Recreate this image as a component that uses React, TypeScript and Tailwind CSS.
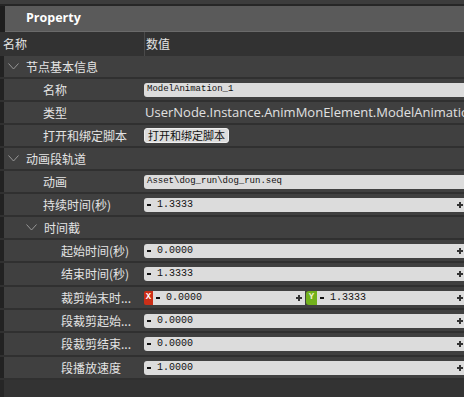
import React from 'react';

type Row = {
  label: string;
  level: number;
  kind: 'group' | 'text' | 'plain' | 'button' | 'num' | 'xy';
  value?: string;
  value2?: string;
  tall?: boolean;
};

const rows: Row[] = [
  { label: '节点基本信息', level: 0, kind: 'group' },
  { label: '名称', level: 1, kind: 'text', value: 'ModelAnimation_1' },
  { label: '类型', level: 1, kind: 'plain', value: 'UserNode.Instance.AnimMonElement.ModelAnimation' },
  { label: '打开和绑定脚本', level: 1, kind: 'button', value: '打开和绑定脚本' },
  { label: '动画段轨道', level: 0, kind: 'group' },
  { label: '动画', level: 1, kind: 'text', value: 'Asset\\dog_run\\dog_run.seq' },
  { label: '持续时间(秒)', level: 1, kind: 'num', value: '1.3333' },
  { label: '时间截', level: 1, kind: 'group' },
  { label: '起始时间(秒)', level: 2, kind: 'num', value: '0.0000' },
  { label: '结束时间(秒)', level: 2, kind: 'num', value: '1.3333', tall: true },
  { label: '裁剪始末时...', level: 2, kind: 'xy', value: '0.0000', value2: '1.3333' },
  { label: '段裁剪起始...', level: 2, kind: 'num', value: '0.0000' },
  { label: '段裁剪结束...', level: 2, kind: 'num', value: '0.0000', tall: true },
  { label: '段播放速度', level: 2, kind: 'num', value: '1.0000' },
];

const cjk = "font-['Noto_Sans_CJK_SC',sans-serif]";

function Chevron() {
  return (
    <svg width="11" height="7" viewBox="0 0 11 7" className="shrink-0">
      <polyline points="0.5,0.5 5.5,6 10.5,0.5" fill="none" stroke="#a0a0a0" strokeWidth="0.9" />
    </svg>
  );
}

function Minus() {
  return <span className="w-[4px] h-[2px] bg-[#111] shrink-0" />;
}

function Plus() {
  return (
    <svg width="6" height="6" viewBox="0 0 6 6" className="shrink-0">
      <rect x="0" y="2" width="6" height="2" fill="#333" />
      <rect x="2" y="0" width="2" height="6" fill="#333" />
    </svg>
  );
}

function NumField({ value, className }: { value: string; className: string }) {
  return (
    <div className={`h-[14px] bg-[#dcdcdc] flex items-center pl-[3px] pr-[3px] ${className}`}>
      <Minus />
      <span className="ml-[6px] flex-1 text-[10px] leading-none text-[#111] font-['Liberation_Mono',monospace]">{value}</span>
      <Plus />
    </div>
  );
}

function Label({ row }: { row: Row }) {
  if (row.kind === 'group') {
    const pad = row.level === 0 ? 'pl-[4px]' : 'pl-[22px]';
    return (
      <div className={`w-[140px] shrink-0 flex items-center ${pad}`}>
        <Chevron />
        <span className={`ml-[7px] text-[12px] text-[#e4e4e4] whitespace-nowrap ${cjk}`}>{row.label}</span>
      </div>
    );
  }
  const pad = row.level === 1 ? 'pl-[39px]' : 'pl-[57px]';
  return (
    <div className={`w-[140px] shrink-0 flex items-center ${pad}`}>
      <span className={`text-[12px] text-[#e4e4e4] whitespace-nowrap ${cjk}`}>{row.label}</span>
    </div>
  );
}

function Value({ row }: { row: Row }) {
  switch (row.kind) {
    case 'text':
      return (
        <div className="w-[330px] h-[14px] bg-[#dcdcdc] rounded-l-[3px] flex items-center pl-[3px]">
          <span className="text-[9px] leading-none text-[#111] font-['Liberation_Mono',monospace]">{row.value}</span>
        </div>
      );
    case 'plain':
      return (
        <span className="pl-[1px] text-[13px] text-[#e0e0e0] whitespace-nowrap font-['Open_Sans',sans-serif]">{row.value}</span>
      );
    case 'button':
      return (
        <div className={`h-[15px] bg-[#dcdcdc] border border-[#eeeeee] rounded-[3px] flex items-center px-[3px] text-[11px] leading-none text-[#111] ${cjk}`}>
          {row.value}
        </div>
      );
    case 'num':
      return <NumField value={row.value!} className="w-[322px] rounded-l-[3px]" />;
    case 'xy':
      return (
        <div className="flex items-center">
          <span className="w-[9px] h-[14px] bg-[#cc2f18] rounded-l-[2px] flex items-center justify-center text-[9px] font-bold text-white leading-none font-['Liberation_Mono',monospace]">X</span>
          <NumField value={row.value!} className="w-[152px]" />
          <span className="ml-[1px] w-[11px] h-[14px] bg-[#72b11c] rounded-l-[3px] flex items-center justify-center text-[9px] font-bold text-[#f0f0d0] leading-none font-['Liberation_Mono',monospace]">Y</span>
          <NumField value={row.value2!} className="w-[149px]" />
        </div>
      );
    default:
      return null;
  }
}

export default function App() {
  return (
    <div className="w-[464px] h-[397px] bg-[#333333] overflow-hidden flex flex-col select-none">
      {/* top strip */}
      <div className="h-[4px] bg-[#3c3c3c] shrink-0" />
      <div className="h-[2px] bg-[#262626] shrink-0" />

      {/* Header */}
      <div className="h-[26px] flex shrink-0">
        <div className="w-[5px] bg-[#1e1e1e]" />
        <div className="flex-1 bg-[#5a5a5a] border-b border-[#6a6a6a] flex items-center pl-[21px]">
          <span className="text-[12.5px] font-bold text-white font-['Open_Sans',sans-serif]">Property</span>
        </div>
      </div>

      {/* Column header */}
      <div className="h-[24px] flex items-center bg-[#323232] shrink-0">
        <div className={`w-[144px] pl-[3px] text-[12px] text-[#e4e4e4] ${cjk}`}>名称</div>
        <div className="w-px h-full bg-[#4a4a4a]" />
        <div className={`pl-[1px] text-[12px] text-[#e4e4e4] ${cjk}`}>数值</div>
      </div>

      {/* Rows */}
      {rows.map((row, i) => (
        <div key={i} className={`${row.tall ? 'h-[24px]' : 'h-[23px]'} flex shrink-0 border-b-2 border-[#303030]`}>
          <div className="w-[4px] bg-[#222222] shrink-0" />
          <div className="flex-1 flex bg-[#404040]">
            <Label row={row} />
            <div className="flex items-center min-w-0">
              <Value row={row} />
            </div>
          </div>
        </div>
      ))}

      {/* Bottom filler */}
      <div className="flex-1 flex">
        <div className="w-[4px] bg-[#262626]" />
        <div className="flex-1 bg-[#333333]" />
      </div>
    </div>
  );
}
